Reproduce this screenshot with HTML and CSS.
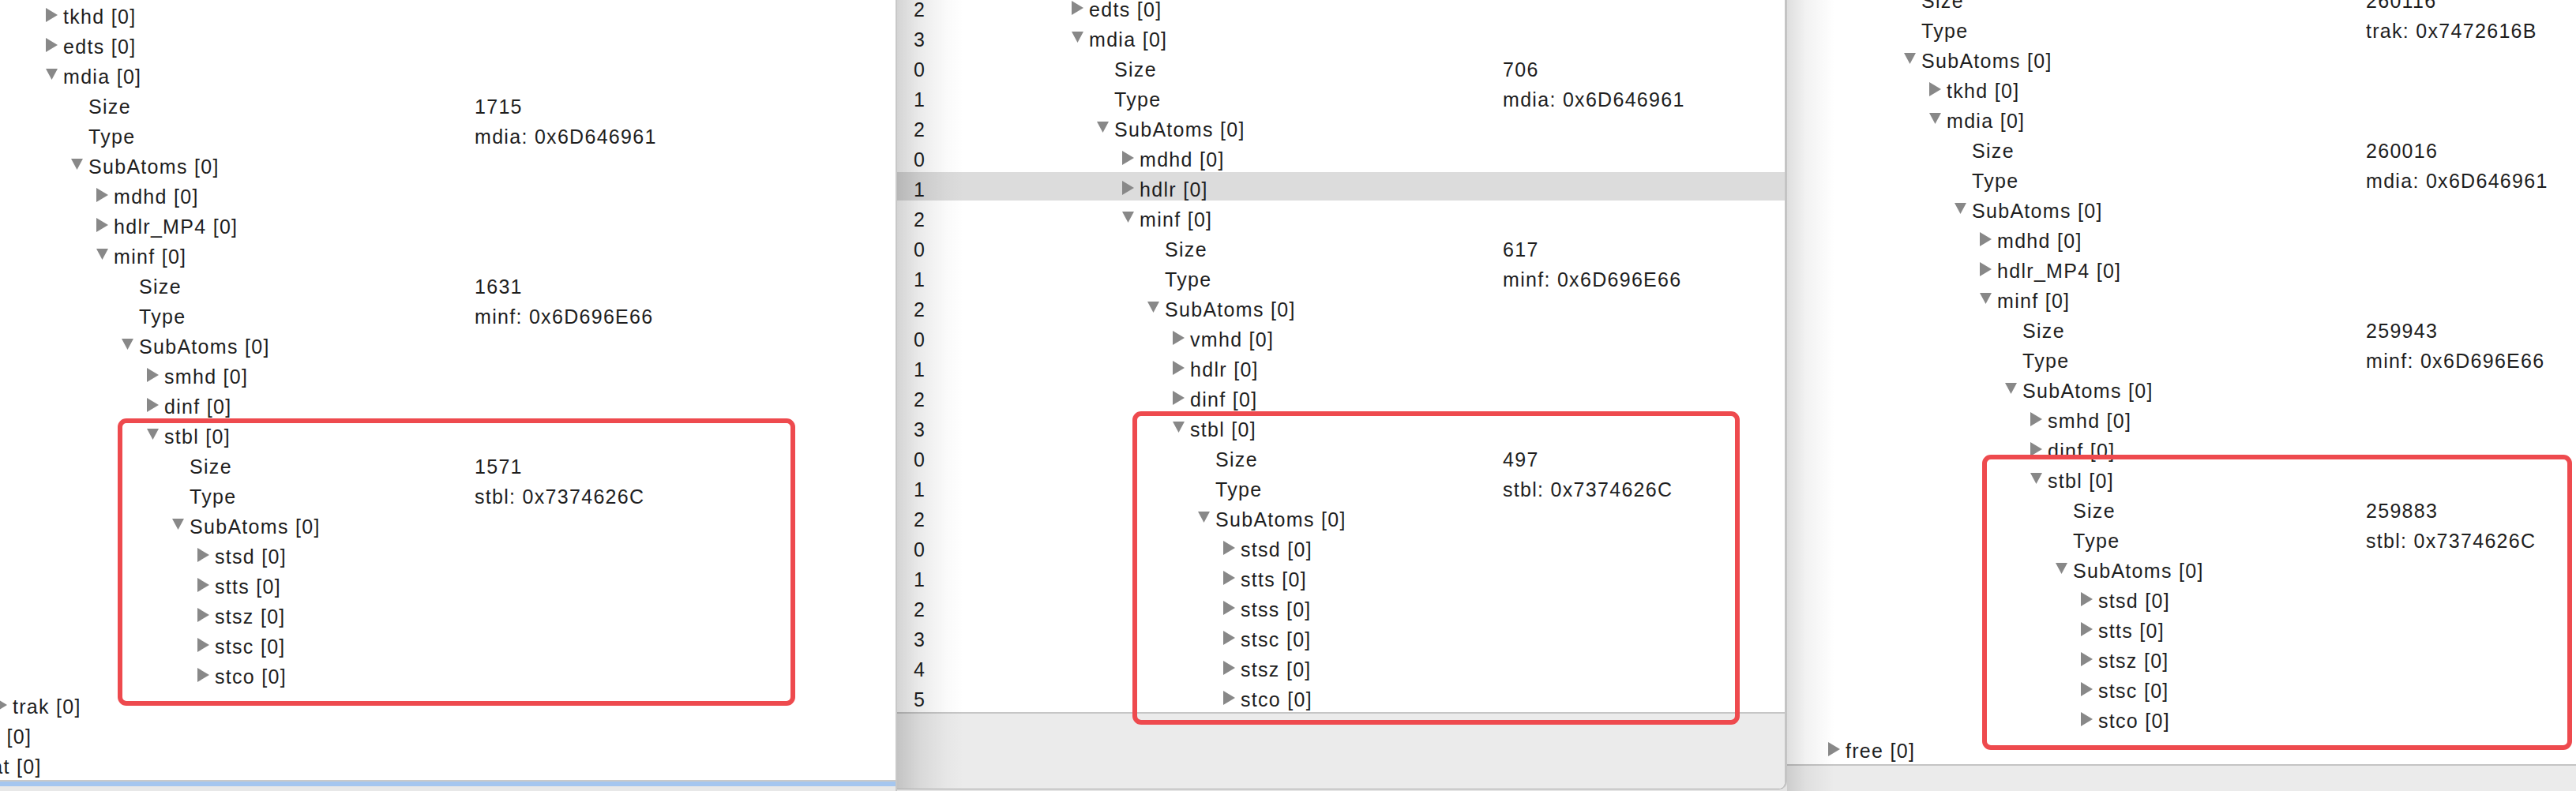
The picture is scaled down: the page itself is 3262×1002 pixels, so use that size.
FILE: index.html
```html
<!DOCTYPE html>
<html>
<head>
<meta charset="utf-8">
<link rel="stylesheet" href="styles.css">
</head>
<body>
<div class="desk">
  <section class="pane pane-a">
    <div class="tree">
      <div class="rows">
        <div class="row"><div class="name d2"><span class="tw r"><svg width="15" height="18" viewBox="0 0 15 18"><path d="M0 0L15 9L0 18Z"/></svg></span><span class="lbl">tkhd [0]</span></div></div>
        <div class="row"><div class="name d2"><span class="tw r"><svg width="15" height="18" viewBox="0 0 15 18"><path d="M0 0L15 9L0 18Z"/></svg></span><span class="lbl">edts [0]</span></div></div>
        <div class="row"><div class="name d2"><span class="tw o"><svg width="15" height="14" viewBox="0 0 15 14"><path d="M0 0H15L7.5 14Z"/></svg></span><span class="lbl">mdia [0]</span></div></div>
        <div class="row"><div class="name d3"><span class="lbl leaf">Size</span></div><div class="val">1715</div></div>
        <div class="row"><div class="name d3"><span class="lbl leaf">Type</span></div><div class="val">mdia: 0x6D646961</div></div>
        <div class="row"><div class="name d3"><span class="tw o"><svg width="15" height="14" viewBox="0 0 15 14"><path d="M0 0H15L7.5 14Z"/></svg></span><span class="lbl">SubAtoms [0]</span></div></div>
        <div class="row"><div class="name d4"><span class="tw r"><svg width="15" height="18" viewBox="0 0 15 18"><path d="M0 0L15 9L0 18Z"/></svg></span><span class="lbl">mdhd [0]</span></div></div>
        <div class="row"><div class="name d4"><span class="tw r"><svg width="15" height="18" viewBox="0 0 15 18"><path d="M0 0L15 9L0 18Z"/></svg></span><span class="lbl">hdlr_MP4 [0]</span></div></div>
        <div class="row"><div class="name d4"><span class="tw o"><svg width="15" height="14" viewBox="0 0 15 14"><path d="M0 0H15L7.5 14Z"/></svg></span><span class="lbl">minf [0]</span></div></div>
        <div class="row"><div class="name d5"><span class="lbl leaf">Size</span></div><div class="val">1631</div></div>
        <div class="row"><div class="name d5"><span class="lbl leaf">Type</span></div><div class="val">minf: 0x6D696E66</div></div>
        <div class="row"><div class="name d5"><span class="tw o"><svg width="15" height="14" viewBox="0 0 15 14"><path d="M0 0H15L7.5 14Z"/></svg></span><span class="lbl">SubAtoms [0]</span></div></div>
        <div class="row"><div class="name d6"><span class="tw r"><svg width="15" height="18" viewBox="0 0 15 18"><path d="M0 0L15 9L0 18Z"/></svg></span><span class="lbl">smhd [0]</span></div></div>
        <div class="row"><div class="name d6"><span class="tw r"><svg width="15" height="18" viewBox="0 0 15 18"><path d="M0 0L15 9L0 18Z"/></svg></span><span class="lbl">dinf [0]</span></div></div>
        <div class="row"><div class="name d6"><span class="tw o"><svg width="15" height="14" viewBox="0 0 15 14"><path d="M0 0H15L7.5 14Z"/></svg></span><span class="lbl">stbl [0]</span></div></div>
        <div class="row"><div class="name d7"><span class="lbl leaf">Size</span></div><div class="val">1571</div></div>
        <div class="row"><div class="name d7"><span class="lbl leaf">Type</span></div><div class="val">stbl: 0x7374626C</div></div>
        <div class="row"><div class="name d7"><span class="tw o"><svg width="15" height="14" viewBox="0 0 15 14"><path d="M0 0H15L7.5 14Z"/></svg></span><span class="lbl">SubAtoms [0]</span></div></div>
        <div class="row"><div class="name d8"><span class="tw r"><svg width="15" height="18" viewBox="0 0 15 18"><path d="M0 0L15 9L0 18Z"/></svg></span><span class="lbl">stsd [0]</span></div></div>
        <div class="row"><div class="name d8"><span class="tw r"><svg width="15" height="18" viewBox="0 0 15 18"><path d="M0 0L15 9L0 18Z"/></svg></span><span class="lbl">stts [0]</span></div></div>
        <div class="row"><div class="name d8"><span class="tw r"><svg width="15" height="18" viewBox="0 0 15 18"><path d="M0 0L15 9L0 18Z"/></svg></span><span class="lbl">stsz [0]</span></div></div>
        <div class="row"><div class="name d8"><span class="tw r"><svg width="15" height="18" viewBox="0 0 15 18"><path d="M0 0L15 9L0 18Z"/></svg></span><span class="lbl">stsc [0]</span></div></div>
        <div class="row"><div class="name d8"><span class="tw r"><svg width="15" height="18" viewBox="0 0 15 18"><path d="M0 0L15 9L0 18Z"/></svg></span><span class="lbl">stco [0]</span></div></div>
        <div class="row"><div class="name d0"><span class="tw r"><svg width="15" height="18" viewBox="0 0 15 18"><path d="M0 0L15 9L0 18Z"/></svg></span><span class="lbl">trak [0]</span></div></div>
        <div class="row"><div class="name dm2"><span class="tw r"><svg width="15" height="18" viewBox="0 0 15 18"><path d="M0 0L15 9L0 18Z"/></svg></span><span class="lbl">free [0]</span></div></div>
        <div class="row"><div class="name dm2"><span class="tw r"><svg width="15" height="18" viewBox="0 0 15 18"><path d="M0 0L15 9L0 18Z"/></svg></span><span class="lbl">mdat [0]</span></div></div>
      </div>
    </div>
    <div class="foot-a"><div class="selbar"></div></div>
    <div class="mark mark-a"></div>
  </section>

  <section class="pane pane-b">
    <div class="tree">
      <div class="rows">
        <div class="row"><div class="num">2</div><div class="name d0"><span class="tw r"><svg width="15" height="18" viewBox="0 0 15 18"><path d="M0 0L15 9L0 18Z"/></svg></span><span class="lbl">edts [0]</span></div></div>
        <div class="row"><div class="num">3</div><div class="name d0"><span class="tw o"><svg width="15" height="14" viewBox="0 0 15 14"><path d="M0 0H15L7.5 14Z"/></svg></span><span class="lbl">mdia [0]</span></div></div>
        <div class="row"><div class="num">0</div><div class="name d1"><span class="lbl leaf">Size</span></div><div class="val">706</div></div>
        <div class="row"><div class="num">1</div><div class="name d1"><span class="lbl leaf">Type</span></div><div class="val">mdia: 0x6D646961</div></div>
        <div class="row"><div class="num">2</div><div class="name d1"><span class="tw o"><svg width="15" height="14" viewBox="0 0 15 14"><path d="M0 0H15L7.5 14Z"/></svg></span><span class="lbl">SubAtoms [0]</span></div></div>
        <div class="row"><div class="num">0</div><div class="name d2"><span class="tw r"><svg width="15" height="18" viewBox="0 0 15 18"><path d="M0 0L15 9L0 18Z"/></svg></span><span class="lbl">mdhd [0]</span></div></div>
        <div class="row sel"><div class="num">1</div><div class="name d2"><span class="tw r"><svg width="15" height="18" viewBox="0 0 15 18"><path d="M0 0L15 9L0 18Z"/></svg></span><span class="lbl">hdlr [0]</span></div></div>
        <div class="row"><div class="num">2</div><div class="name d2"><span class="tw o"><svg width="15" height="14" viewBox="0 0 15 14"><path d="M0 0H15L7.5 14Z"/></svg></span><span class="lbl">minf [0]</span></div></div>
        <div class="row"><div class="num">0</div><div class="name d3"><span class="lbl leaf">Size</span></div><div class="val">617</div></div>
        <div class="row"><div class="num">1</div><div class="name d3"><span class="lbl leaf">Type</span></div><div class="val">minf: 0x6D696E66</div></div>
        <div class="row"><div class="num">2</div><div class="name d3"><span class="tw o"><svg width="15" height="14" viewBox="0 0 15 14"><path d="M0 0H15L7.5 14Z"/></svg></span><span class="lbl">SubAtoms [0]</span></div></div>
        <div class="row"><div class="num">0</div><div class="name d4"><span class="tw r"><svg width="15" height="18" viewBox="0 0 15 18"><path d="M0 0L15 9L0 18Z"/></svg></span><span class="lbl">vmhd [0]</span></div></div>
        <div class="row"><div class="num">1</div><div class="name d4"><span class="tw r"><svg width="15" height="18" viewBox="0 0 15 18"><path d="M0 0L15 9L0 18Z"/></svg></span><span class="lbl">hdlr [0]</span></div></div>
        <div class="row"><div class="num">2</div><div class="name d4"><span class="tw r"><svg width="15" height="18" viewBox="0 0 15 18"><path d="M0 0L15 9L0 18Z"/></svg></span><span class="lbl">dinf [0]</span></div></div>
        <div class="row"><div class="num">3</div><div class="name d4"><span class="tw o"><svg width="15" height="14" viewBox="0 0 15 14"><path d="M0 0H15L7.5 14Z"/></svg></span><span class="lbl">stbl [0]</span></div></div>
        <div class="row"><div class="num">0</div><div class="name d5"><span class="lbl leaf">Size</span></div><div class="val">497</div></div>
        <div class="row"><div class="num">1</div><div class="name d5"><span class="lbl leaf">Type</span></div><div class="val">stbl: 0x7374626C</div></div>
        <div class="row"><div class="num">2</div><div class="name d5"><span class="tw o"><svg width="15" height="14" viewBox="0 0 15 14"><path d="M0 0H15L7.5 14Z"/></svg></span><span class="lbl">SubAtoms [0]</span></div></div>
        <div class="row"><div class="num">0</div><div class="name d6"><span class="tw r"><svg width="15" height="18" viewBox="0 0 15 18"><path d="M0 0L15 9L0 18Z"/></svg></span><span class="lbl">stsd [0]</span></div></div>
        <div class="row"><div class="num">1</div><div class="name d6"><span class="tw r"><svg width="15" height="18" viewBox="0 0 15 18"><path d="M0 0L15 9L0 18Z"/></svg></span><span class="lbl">stts [0]</span></div></div>
        <div class="row"><div class="num">2</div><div class="name d6"><span class="tw r"><svg width="15" height="18" viewBox="0 0 15 18"><path d="M0 0L15 9L0 18Z"/></svg></span><span class="lbl">stss [0]</span></div></div>
        <div class="row"><div class="num">3</div><div class="name d6"><span class="tw r"><svg width="15" height="18" viewBox="0 0 15 18"><path d="M0 0L15 9L0 18Z"/></svg></span><span class="lbl">stsc [0]</span></div></div>
        <div class="row"><div class="num">4</div><div class="name d6"><span class="tw r"><svg width="15" height="18" viewBox="0 0 15 18"><path d="M0 0L15 9L0 18Z"/></svg></span><span class="lbl">stsz [0]</span></div></div>
        <div class="row"><div class="num">5</div><div class="name d6"><span class="tw r"><svg width="15" height="18" viewBox="0 0 15 18"><path d="M0 0L15 9L0 18Z"/></svg></span><span class="lbl">stco [0]</span></div></div>
      </div>
    </div>
    <div class="foot-b"></div>
    <div class="mark mark-b"></div>
  </section>

  <section class="pane pane-c">
    <div class="tree">
      <div class="rows">
        <div class="row"><div class="name d3"><span class="lbl leaf">Size</span></div><div class="val">260116</div></div>
        <div class="row"><div class="name d3"><span class="lbl leaf">Type</span></div><div class="val">trak: 0x7472616B</div></div>
        <div class="row"><div class="name d3"><span class="tw o"><svg width="15" height="14" viewBox="0 0 15 14"><path d="M0 0H15L7.5 14Z"/></svg></span><span class="lbl">SubAtoms [0]</span></div></div>
        <div class="row"><div class="name d4"><span class="tw r"><svg width="15" height="18" viewBox="0 0 15 18"><path d="M0 0L15 9L0 18Z"/></svg></span><span class="lbl">tkhd [0]</span></div></div>
        <div class="row"><div class="name d4"><span class="tw o"><svg width="15" height="14" viewBox="0 0 15 14"><path d="M0 0H15L7.5 14Z"/></svg></span><span class="lbl">mdia [0]</span></div></div>
        <div class="row"><div class="name d5"><span class="lbl leaf">Size</span></div><div class="val">260016</div></div>
        <div class="row"><div class="name d5"><span class="lbl leaf">Type</span></div><div class="val">mdia: 0x6D646961</div></div>
        <div class="row"><div class="name d5"><span class="tw o"><svg width="15" height="14" viewBox="0 0 15 14"><path d="M0 0H15L7.5 14Z"/></svg></span><span class="lbl">SubAtoms [0]</span></div></div>
        <div class="row"><div class="name d6"><span class="tw r"><svg width="15" height="18" viewBox="0 0 15 18"><path d="M0 0L15 9L0 18Z"/></svg></span><span class="lbl">mdhd [0]</span></div></div>
        <div class="row"><div class="name d6"><span class="tw r"><svg width="15" height="18" viewBox="0 0 15 18"><path d="M0 0L15 9L0 18Z"/></svg></span><span class="lbl">hdlr_MP4 [0]</span></div></div>
        <div class="row"><div class="name d6"><span class="tw o"><svg width="15" height="14" viewBox="0 0 15 14"><path d="M0 0H15L7.5 14Z"/></svg></span><span class="lbl">minf [0]</span></div></div>
        <div class="row"><div class="name d7"><span class="lbl leaf">Size</span></div><div class="val">259943</div></div>
        <div class="row"><div class="name d7"><span class="lbl leaf">Type</span></div><div class="val">minf: 0x6D696E66</div></div>
        <div class="row"><div class="name d7"><span class="tw o"><svg width="15" height="14" viewBox="0 0 15 14"><path d="M0 0H15L7.5 14Z"/></svg></span><span class="lbl">SubAtoms [0]</span></div></div>
        <div class="row"><div class="name d8"><span class="tw r"><svg width="15" height="18" viewBox="0 0 15 18"><path d="M0 0L15 9L0 18Z"/></svg></span><span class="lbl">smhd [0]</span></div></div>
        <div class="row"><div class="name d8"><span class="tw r"><svg width="15" height="18" viewBox="0 0 15 18"><path d="M0 0L15 9L0 18Z"/></svg></span><span class="lbl">dinf [0]</span></div></div>
        <div class="row"><div class="name d8"><span class="tw o"><svg width="15" height="14" viewBox="0 0 15 14"><path d="M0 0H15L7.5 14Z"/></svg></span><span class="lbl">stbl [0]</span></div></div>
        <div class="row"><div class="name d9"><span class="lbl leaf">Size</span></div><div class="val">259883</div></div>
        <div class="row"><div class="name d9"><span class="lbl leaf">Type</span></div><div class="val">stbl: 0x7374626C</div></div>
        <div class="row"><div class="name d9"><span class="tw o"><svg width="15" height="14" viewBox="0 0 15 14"><path d="M0 0H15L7.5 14Z"/></svg></span><span class="lbl">SubAtoms [0]</span></div></div>
        <div class="row"><div class="name d10"><span class="tw r"><svg width="15" height="18" viewBox="0 0 15 18"><path d="M0 0L15 9L0 18Z"/></svg></span><span class="lbl">stsd [0]</span></div></div>
        <div class="row"><div class="name d10"><span class="tw r"><svg width="15" height="18" viewBox="0 0 15 18"><path d="M0 0L15 9L0 18Z"/></svg></span><span class="lbl">stts [0]</span></div></div>
        <div class="row"><div class="name d10"><span class="tw r"><svg width="15" height="18" viewBox="0 0 15 18"><path d="M0 0L15 9L0 18Z"/></svg></span><span class="lbl">stsz [0]</span></div></div>
        <div class="row"><div class="name d10"><span class="tw r"><svg width="15" height="18" viewBox="0 0 15 18"><path d="M0 0L15 9L0 18Z"/></svg></span><span class="lbl">stsc [0]</span></div></div>
        <div class="row"><div class="name d10"><span class="tw r"><svg width="15" height="18" viewBox="0 0 15 18"><path d="M0 0L15 9L0 18Z"/></svg></span><span class="lbl">stco [0]</span></div></div>
        <div class="row"><div class="name d0"><span class="tw r"><svg width="15" height="18" viewBox="0 0 15 18"><path d="M0 0L15 9L0 18Z"/></svg></span><span class="lbl">free [0]</span></div></div>
      </div>
    </div>
    <div class="foot-c"></div>
    <div class="mark mark-c"></div>
  </section>
</div>
</body>
</html>
```

FILE: styles.css
```css
html, body {
  margin: 0;
  padding: 0;
  height: 100%;
  overflow: hidden;
  background: #e4e4e4;
}

.desk {
  display: flex;
  width: 3262px;
  height: 1002px;
  font-family: "Liberation Sans", Arial, sans-serif;
  font-size: 25px;
  letter-spacing: 1.3px;
  color: #1e1e1e;
}

.pane {
  position: relative;
  display: flex;
  flex-direction: column;
  overflow: hidden;
  background: #ffffff;
  box-sizing: border-box;
}

.pane-a {
  width: 1136px;
  height: 1002px;
  border-right: 2px solid #c8c8c8;
  --numw: 0px;
  --base: 16px;
  --valx: 601px;
}

.pane-b {
  width: 1127px;
  height: 1000px;
  border-right: 3px solid #c4c4c4;
  border-bottom: 1px solid #a9a9a9;
  border-bottom-right-radius: 10px;
  z-index: 2;
  --base: 183px;
  --valx: 707px;
}

.pane-c {
  width: 999px;
  height: 1002px;
  --base: 74px;
  --valx: 733px;
}

.pane-b::before,
.pane-c::before {
  content: "";
  position: absolute;
  left: 0;
  top: 0;
  bottom: 0;
  pointer-events: none;
  z-index: 3;
}

.pane-b::before {
  width: 84px;
  background: linear-gradient(to right, rgba(0,0,0,0.17), rgba(0,0,0,0.08) 35%, rgba(0,0,0,0.02) 75%, rgba(0,0,0,0));
}

.pane-c::before {
  width: 60px;
  background: linear-gradient(to right, rgba(0,0,0,0.13), rgba(0,0,0,0.05) 40%, rgba(0,0,0,0));
}

.tree {
  flex: none;
  overflow: hidden;
  background: #ffffff;
}

.pane-a .tree { height: 988px; }
.pane-b .tree { height: 902px; }
.pane-c .tree { height: 968px; }

.pane-a .rows { margin-top: -1px; }
.pane-b .rows { margin-top: -10px; }
.pane-c .rows { margin-top: -21px; }

.row {
  display: flex;
  height: 38px;
  box-sizing: border-box;
  padding-top: 6px;
  line-height: 32px;
  white-space: nowrap;
}

.row.sel {
  background: linear-gradient(#dcdcdc, #dcdcdc) 0 0 / 100% 36px no-repeat;
}

.num {
  flex: 0 0 60px;
  box-sizing: border-box;
  padding-left: 21px;
}

.name {
  flex: 0 0 var(--valx);
  display: flex;
  min-width: 0;
}

.val {
  flex: 1;
}

.dm2 { --d: -2; }
.d0 { --d: 0; }
.d1 { --d: 1; }
.d2 { --d: 2; }
.d3 { --d: 3; }
.d4 { --d: 4; }
.d5 { --d: 5; }
.d6 { --d: 6; }
.d7 { --d: 7; }
.d8 { --d: 8; }
.d9 { --d: 9; }
.d10 { --d: 10; }

.tw {
  flex: none;
  width: 22px;
  height: 32px;
  margin-left: calc(var(--base) + var(--d) * 32px - 22px);
}

.tw svg {
  display: block;
  fill: #888888;
}

.tw.r svg { margin-top: 5px; }
.tw.o svg { margin-top: 6px; }

.lbl.leaf {
  margin-left: calc(var(--base) + var(--d) * 32px);
}

.foot-a {
  flex: 1;
  border-top: 2px solid #c9c9c9;
  background: #e8e8e8;
}

.selbar {
  height: 6px;
  background: #a5c6ef;
}

.foot-b {
  flex: 1;
  border-top: 2px solid #c6c6c6;
  background: #ebebeb;
}

.foot-c {
  flex: 1;
  border-top: 2px solid #c4c4c4;
  background: #ebebeb;
}

.mark {
  position: absolute;
  box-sizing: border-box;
  border: 6px solid #ee4a4e;
  border-radius: 11px;
  z-index: 4;
  pointer-events: none;
}

.mark-a {
  left: 149px;
  top: 530px;
  width: 858px;
  height: 364px;
}

.mark-b {
  left: 298px;
  top: 521px;
  width: 769px;
  height: 397px;
}

.mark-c {
  left: 247px;
  top: 576px;
  width: 747px;
  height: 374px;
}
```
